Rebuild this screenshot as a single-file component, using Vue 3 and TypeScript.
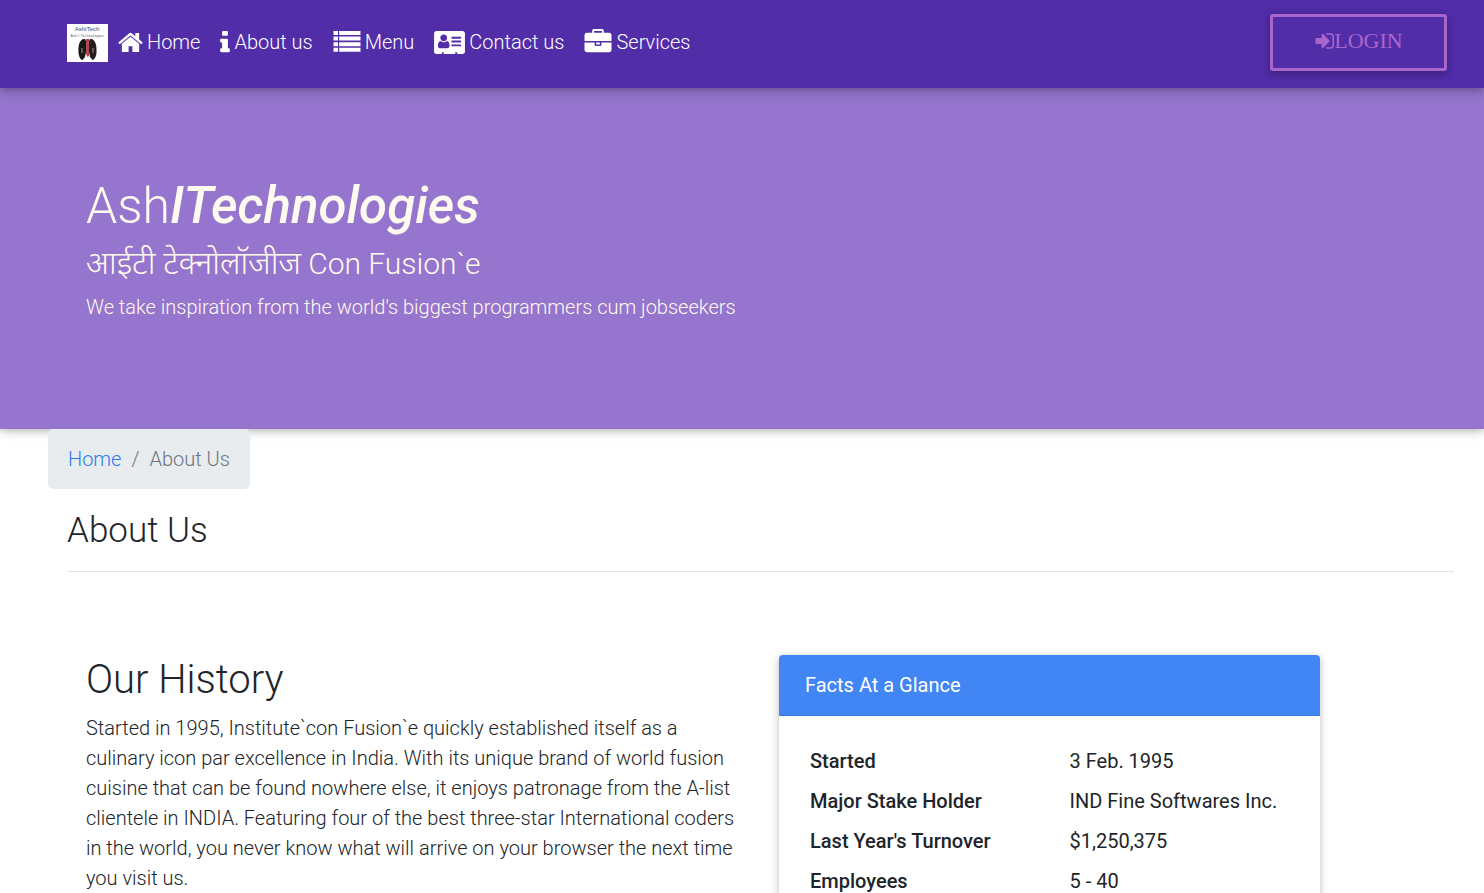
<script setup lang="ts">
interface NavItem {
  label: string
  viewBox: string
  path: string
  size: string
}

const navItems: NavItem[] = [
  {
    label: 'Home',
    size: 'w-home',
    viewBox: '0 0 1664 1792',
    path: 'M1408 992v480q0 26-19 45t-45 19h-384v-384h-256v384h-384q-26 0-45-19t-19-45v-480q0-1 .5-3t.5-3l575-474 575 474q1 2 1 6zm223-69l-62 74q-8 9-21 11h-3q-13 0-21-7l-692-577-692 577q-12 8-24 7-13-2-21-11l-62-74q-8-10-7-23.5t11-21.5l719-599q32-26 76-26t76 26l244 204v-195q0-14 9-23t23-9h192q14 0 23 9t9 23v408l219 182q10 8 11 21.5t-7 23.5z',
  },
  {
    label: 'About us',
    size: 'w-info',
    viewBox: '576 0 640 1792',
    path: 'M1216 1344v128q0 26-19 45t-45 19h-512q-26 0-45-19t-19-45v-128q0-26 19-45t45-19h64v-384h-64q-26 0-45-19t-19-45v-128q0-26 19-45t45-19h384q26 0 45 19t19 45v576h64q26 0 45 19t19 45zm-128-1152v192q0 26-19 45t-45 19h-256q-26 0-45-19t-19-45v-192q0-26 19-45t45-19h256q26 0 45 19t19 45z',
  },
  {
    label: 'Menu',
    size: 'w-list',
    viewBox: '0 0 1792 1792',
    path: 'M0 128h296v270H0zM376 128h1416v270H376zM0 500h296v270H0zM376 500h1416v270H376zM0 872h296v270H0zM376 872h1416v270H376zM0 1244h296v270H0zM376 1244h1416v270H376z',
  },
  {
    label: 'Contact us',
    size: 'w-card',
    viewBox: '0 0 2048 1792',
    path: 'M1024 1131q0-64-9-117.5t-29.5-103-60.5-78-97-28.5q-6 4-30 18t-37.5 21.5-35.5 17.5-43 14.5-42 4.5-42-4.5-43-14.5-35.5-17.5-37.5-21.5-30-18q-57 0-97 28.5t-60.5 78-29.5 103-9 117.5q0 57 37 101t91 44h512q54 0 91-44t37-101zM867 585q0-94-66.5-160.5t-160.5-66.5-160.5 66.5-66.5 160.5 66.5 160.5 160.5 66.5 160.5-66.5 66.5-160.5zM1792 1120v-64q0-14-9-23t-23-9h-576q-14 0-23 9t-9 23v64q0 14 9 23t23 9h576q14 0 23-9t9-23zM1792 864v-64q0-14-9-23t-23-9h-576q-14 0-23 9t-9 23v64q0 14 9 23t23 9h576q14 0 23-9t9-23zM1792 608v-64q0-14-9-23t-23-9h-576q-14 0-23 9t-9 23v64q0 14 9 23t23 9h576q14 0 23-9t9-23zM2048 288v1216q0 66-47 113t-113 47h-352v-96q0-14-9-23t-23-9h-64q-14 0-23 9t-9 23v96h-768v-96q0-14-9-23t-23-9h-64q-14 0-23 9t-9 23v96h-352q-66 0-113-47t-47-113v-1216q0-66 47-113t113-47h1728q66 0 113 47t47 113z',
  },
  {
    label: 'Services',
    size: 'w-list',
    viewBox: '0 0 1792 1792',
    path: 'M640 256h512v-128h-512v128zm1152 640v480q0 66-47 113t-113 47h-1472q-66 0-113-47t-47-113v-480h672v160q0 26 19 45t45 19h320q26 0 45-19t19-45v-160h672zm-768 0v128h-256v-128h256zm768-480v384h-1792v-384q0-66 47-113t113-47h352v-160q0-40 28-68t68-28h576q40 0 68 28t28 68v160h352q66 0 113 47t47 113z',
  },
]

const facts: { name: string; value: string }[] = [
  { name: 'Started', value: '3 Feb. 1995' },
  { name: 'Major Stake Holder', value: 'IND Fine Softwares Inc.' },
  { name: "Last Year's Turnover", value: '$1,250,375' },
  { name: 'Employees', value: '5 - 40' },
]
</script>

<template>
  <div class="page">
    <nav class="navbar">
      <a class="brand" href="#" aria-label="AshITech">
        <svg class="logo" viewBox="0 0 41 38">
          <rect width="41" height="38" fill="#fff" />
          <text x="20" y="7" text-anchor="middle" font-size="6" fill="#35506b">AshITech</text>
          <text x="20" y="13" text-anchor="middle" font-size="4" fill="#66727e">Ash I Technologies</text>
          <path d="M18 15c-5-1-7 6-6.500 13 0 4 2 8 4 8l2.500-3 1-5v-11z" fill="#171717" />
          <path d="M23 15c5-1 7 6 6.500 13 0 4-2 8-4 8l-2.500-3-1-5v-11z" fill="#251c1c" />
          <path d="M19 15h3v17l-1.500 1-1.500-3z" fill="#b34655" />
          <path d="M15 24v5M26 24v5" stroke="#999" stroke-width="1" />
        </svg>
      </a>
      <ul class="links">
        <li v-for="item in navItems" :key="item.label">
          <a href="#">
            <svg class="icon" :class="item.size" :viewBox="item.viewBox" aria-hidden="true">
              <path :d="item.path" fill="currentColor" />
            </svg>
            <span>{{ item.label }}</span>
          </a>
        </li>
      </ul>
      <button class="login" type="button">
        <svg class="sign-in" viewBox="0 0 1664 1792" aria-hidden="true">
          <path fill="currentColor" d="M1312 896q0 26-19 45l-544 544q-19 19-45 19t-45-19-19-45v-288h-448q-26 0-45-19t-19-45v-384q0-26 19-45t45-19h448v-288q0-26 19-45t45-19 45 19l544 544q19 19 19 45zm352-352v704q0 119-84.500 203.500t-203.500 84.500h-320q-13 0-22.500-9.500t-9.500-22.500q0-4-1-20t-.5-26.500 3-23.500 10-19.500 20.500-6.500h320q66 0 113-47t47-113v-704q0-66-47-113t-113-47h-312l-11.500-1-11.500-3-8-5.500-7-9-2-13.500q0-4-1-20t-.5-26.500 3-23.500 10-19.500 20.500-6.500h320q119 0 203.500 84.500t84.500 203.500z" />
        </svg>
        <span>LOGIN</span>
      </button>
    </nav>

    <header class="hero">
      <h1>Ash<strong><em>ITechnologies</em></strong></h1>
      <h2><span class="hindi" lang="hi">आईटी टेक्नोलॉजीज</span> Con Fusion`e</h2>
      <p>We take inspiration from the world's biggest programmers cum jobseekers</p>
    </header>

    <main>
      <nav class="crumbs" aria-label="Breadcrumb">
        <a href="#">Home</a>
        <span class="slash">/</span>
        <span>About Us</span>
      </nav>

      <div class="title">
        <h3>About Us</h3>
        <hr />
      </div>

      <div class="columns">
        <section class="history">
          <h2>Our History</h2>
          <p>
            Started in 1995, Institute`con Fusion`e quickly established itself as a culinary icon par
            excellence in India. With its unique brand of world fusion cuisine that can be found
            nowhere else, it enjoys patronage from the A-list clientele in INDIA. Featuring four of
            the best three-star International coders in the world, you never know what will arrive on
            your browser the next time you visit us.
          </p>
        </section>
        <section class="card">
          <h3>Facts At a Glance</h3>
          <table>
            <tbody>
              <tr v-for="fact in facts" :key="fact.name">
                <th scope="row">{{ fact.name }}</th>
                <td>{{ fact.value }}</td>
              </tr>
            </tbody>
          </table>
        </section>
      </div>
    </main>
  </div>
</template>

<style>
body {
  margin: 0;
  background: #fff;
}
</style>

<style scoped>
.page {
  height: 100vh;
  overflow: hidden;
  font-family: Roboto, "Noto Sans", sans-serif;
  font-size: 20px;
  font-weight: 300;
  line-height: 30px;
  color: #212529;
}
h1, h2, h3, p, ul {
  margin: 0;
  padding: 0;
  font-weight: 300;
}
a {
  color: inherit;
  text-decoration: none;
}
.navbar {
  position: relative;
  z-index: 1;
  display: flex;
  align-items: flex-start;
  box-sizing: border-box;
  min-height: 88px;
  padding: 14px 37px 0 67px;
  background: #512da8;
  color: #fff;
  box-shadow: 0 2px 6px rgba(0, 0, 0, 0.16), 0 3px 12px rgba(0, 0, 0, 0.2);
}
.logo {
  display: block;
  width: 41px;
  height: 38px;
  margin: 10px 10px 0 0;
  font-family: "Liberation Sans", sans-serif;
}
.links {
  display: flex;
  flex: 1;
  gap: 20px;
  margin-top: 13px;
  list-style: none;
}
.links a {
  display: flex;
  align-items: center;
  gap: 4px;
}
.icon {
  display: block;
  height: 27px;
}
.w-home { width: 25px; }
.w-info { width: 10px; }
.w-list { width: 28px; }
.w-card { width: 31px; }
.login {
  display: flex;
  align-items: center;
  justify-content: center;
  box-sizing: border-box;
  width: 177px;
  height: 57px;
  padding: 0 0 3px;
  border: 3px solid #aa66cc;
  border-radius: 3px;
  background: transparent;
  color: #aa66cc;
  font: 22px/30px "Liberation Serif", serif;
  box-shadow: 0 2px 6px rgba(0, 0, 0, 0.16), 0 3px 12px rgba(0, 0, 0, 0.16);
}
.sign-in {
  width: 20px;
  height: 22px;
}
.hero {
  padding: 88px 86px 107px;
  background: #9575cd;
  color: floralwhite;
  box-shadow: 0 2px 6px rgba(0, 0, 0, 0.16), 0 2px 12px rgba(0, 0, 0, 0.16);
}
.hero h1 {
  margin-bottom: 10px;
  font-size: 50px;
  line-height: 60px;
}
.hero strong {
  font-size: 51px;
  font-weight: 500;
  line-height: 1;
}
.hero h2 {
  margin-bottom: 10px;
  font-size: 30px;
  line-height: 36px;
}
.hindi {
  font-size: 32px;
  line-height: 1;
}
main {
  position: relative;
}
.crumbs {
  display: flex;
  gap: 10px;
  width: max-content;
  margin-left: 48px;
  padding: 15px 20px;
  border-radius: 5px;
  background: #e9ecef;
  color: #6c757d;
}
.crumbs a {
  color: #2b7bf0;
}
.title {
  margin: 20px 30px 0 67px;
}
.title h3 {
  font-size: 35px;
  line-height: 44px;
}
.title hr {
  height: 1px;
  margin: 18px 0 0;
  border: 0;
  background: #e5e5e5;
}
.columns {
  display: grid;
  grid-template-columns: 655fr 541fr;
  gap: 38px;
  padding: 83px 164px 0 86px;
}
.history h2 {
  margin-bottom: 8px;
  font-size: 40px;
  line-height: 50px;
}
.card {
  align-self: start;
  padding-bottom: 25px;
  border-radius: 4px;
  box-shadow: 0 2px 6px rgba(0, 0, 0, 0.16), 0 2px 12px rgba(0, 0, 0, 0.12);
}
.card h3 {
  padding: 15px 26px;
  border-bottom: 1px solid #3b78dc;
  border-radius: 4px 4px 0 0;
  background: #4285f4;
  color: #fff;
  font-size: 20px;
  font-weight: 400;
}
table {
  width: 100%;
  padding: 25px 31px 0;
  border-spacing: 0;
}
th, td {
  width: 50%;
  padding: 5px 0;
  text-align: left;
  font-weight: 400;
}
th {
  font-weight: 500;
}
td {
  padding-left: 20px;
}
</style>
